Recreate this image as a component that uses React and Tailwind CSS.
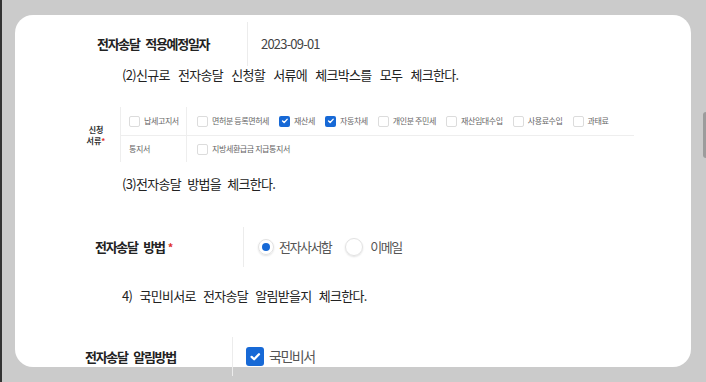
import React from 'react';

const ROW1 = [
  { label: '면허분 등록면허세', checked: false },
  { label: '재산세', checked: true },
  { label: '자동차세', checked: true },
  { label: '개인분 주민세', checked: false },
  { label: '재산임대수입', checked: false },
  { label: '사용료수입', checked: false },
  { label: '과태료', checked: false },
];

function Check({ on, size = 'sm' }) {
  const box = size === 'sm' ? 'w-[11px] h-[11px] rounded-[2px]' : 'w-[18px] h-[19px] rounded-[3px]';
  if (on) {
    return (
      <span className={`${box} shrink-0 bg-[#1769d6] flex items-center justify-center`}>
        <svg viewBox="0 0 12 12" className="w-[70%] h-[70%]" fill="none" stroke="white" strokeWidth={2.2} strokeLinecap="round" strokeLinejoin="round">
          <path d="M2.5 6.2l2.4 2.3 4.6-4.8" />
        </svg>
      </span>
    );
  }
  return <span className={`${box} shrink-0 border border-[#dcdcdc] bg-white`} />;
}

function Item({ label, checked }) {
  return (
    <div className="flex items-center gap-[4px]">
      <Check on={checked} />
      <span className="text-[8px] tracking-[-0.4px] text-[#666]">{label}</span>
    </div>
  );
}

export default function App() {
  return (
    <div className="relative w-[706px] h-[382px] bg-[#cbcbcb] border-l-2 border-[#333] overflow-hidden font-['Noto_Sans_CJK_KR','Noto_Sans',sans-serif]">
      {/* scrollbar thumb */}
      <div className="absolute right-0 top-[112px] w-[3px] h-[46px] rounded-l-sm bg-[#9c9c9c]" />

      <div className="ml-[13px] mt-[15px] w-[676px] h-[352px] rounded-[18px] bg-white pt-[7px]">
        {/* 적용예정일자 */}
        <div className="flex h-[44px] pl-[82px]">
          <div className="w-[150px] flex items-center text-[13px] font-bold tracking-[-1.3px] [word-spacing:4px] text-[#222]">전자송달 적용예정일자</div>
          <div className="border-l border-[#ececec] pl-[13px] flex items-center text-[13px] tracking-[-0.8px] text-[#444]">2023-09-01</div>
        </div>

        <p className="h-[18px] leading-[18px] pl-[107px] text-[13px] tracking-[-0.7px] [word-spacing:6px] text-[#222]">
          (2)신규로 전자송달 신청할 서류에 체크박스를 모두 체크한다.
        </p>

        {/* 신청 서류 table */}
        <div className="mt-[23px] ml-[57px] flex h-[55px]">
          <div className="w-[48px] flex flex-col items-center justify-center text-[8px] font-bold leading-[11px] text-[#333]">
            <span>신청</span>
            <span>서류<span className="text-[#e0322b]">*</span></span>
          </div>
          <div className="border-l border-[#eeeeee] flex flex-col">
            <div className="flex h-[29px] border-b border-[#eeeeee]">
              <div className="w-[66px] pl-[8px] flex items-center border-r border-[#eeeeee]">
                <Item label="납세고지서" checked={false} />
              </div>
              <div className="w-[447px] pl-[10px] flex items-center gap-[10px]">
                {ROW1.map((it) => (
                  <Item key={it.label} label={it.label} checked={it.checked} />
                ))}
              </div>
            </div>
            <div className="flex h-[26px]">
              <div className="w-[66px] pl-[8px] flex items-center border-r border-[#eeeeee] text-[8px] tracking-[-0.4px] text-[#666]">통지서</div>
              <div className="pl-[10px] flex items-center">
                <Item label="지방세환급금 지급통지서" checked={false} />
              </div>
            </div>
          </div>
        </div>

        <p className="mt-[13px] h-[18px] leading-[18px] pl-[107px] text-[13px] tracking-[-0.7px] [word-spacing:4px] text-[#222]">
          (3)전자송달 방법을 체크한다.
        </p>

        {/* 전자송달 방법 */}
        <div className="mt-[34px] flex h-[40px] pl-[80px]">
          <div className="w-[148px] flex items-center text-[13px] font-bold tracking-[-1.3px] [word-spacing:4px] text-[#222]">
            전자송달 방법<span className="ml-[3px] text-[#e0322b] text-[11px]">*</span>
          </div>
          <div className="border-l border-[#ececec] pl-[14px] flex items-center">
            <span className="w-[16px] h-[16px] rounded-full border border-[#e2e2e2] shadow-[0_1px_2px_rgba(0,0,0,0.12)] flex items-center justify-center">
              <span className="w-[8px] h-[8px] rounded-full bg-[#1769d6]" />
            </span>
            <span className="ml-[5px] text-[13px] tracking-[-1.5px] text-[#555]">전자사서함</span>
            <span className="ml-[14px] w-[18px] h-[18px] rounded-full border border-[#e2e2e2] shadow-[0_1px_2px_rgba(0,0,0,0.12)]" />
            <span className="ml-[7px] text-[13px] tracking-[-1.5px] text-[#555]">이메일</span>
          </div>
        </div>

        <p className="mt-[20px] h-[18px] leading-[18px] pl-[107px] text-[13px] tracking-[-0.7px] [word-spacing:5px] text-[#222]">
          4) 국민비서로 전자송달 알림받을지 체크한다.
        </p>

        {/* 알림방법 */}
        <div className="mt-[32px] flex h-[39px] pl-[70px]">
          <div className="w-[147px] flex items-center text-[13px] font-bold tracking-[-1.3px] [word-spacing:4px] text-[#222]">전자송달 알림방법</div>
          <div className="border-l border-[#ececec] pl-[13px] flex items-center">
            <Check on size="lg" />
            <span className="ml-[5px] text-[14px] tracking-[-1.5px] text-[#555]">국민비서</span>
          </div>
        </div>
      </div>
    </div>
  );
}
